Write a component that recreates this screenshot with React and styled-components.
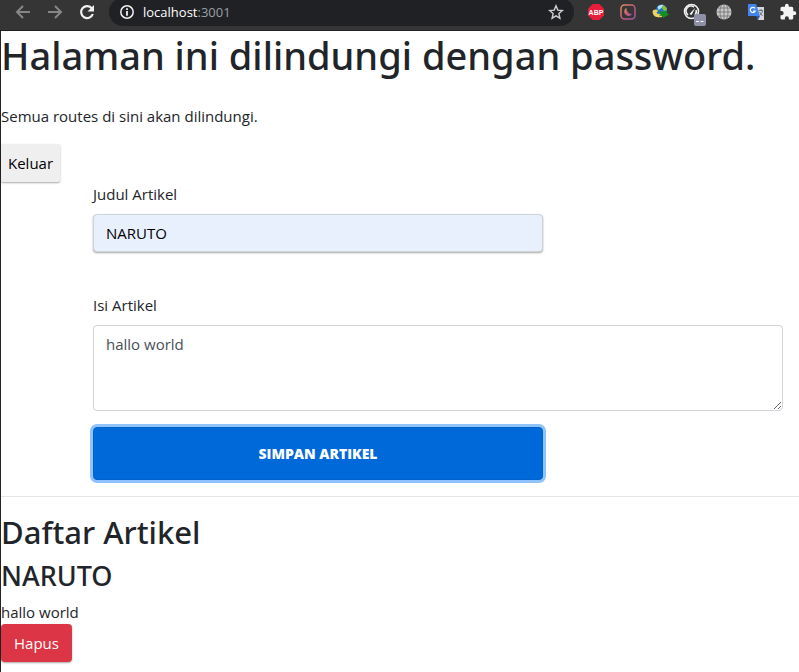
import React from "react";
import styled, { createGlobalStyle } from "styled-components";

const GlobalStyle = createGlobalStyle`
  *, *::before, *::after { box-sizing: border-box; }
  body {
    margin: 0;
    background: #fff;
    color: #212529;
    font-family: "Open Sans", "Noto Sans", sans-serif;
    font-size: 15px;
    line-height: 24px;
  }
  h1, h2, h3 { font-family: "Noto Sans", "Open Sans", sans-serif; font-weight: 500; }
  button, input, textarea { font: inherit; margin: 0; }
`;

const Window = styled.div`
  display: flex;
  flex-direction: column;
  min-height: 100vh;
`;

const Toolbar = styled.header`
  display: flex;
  align-items: center;
  height: 31px;
  padding: 0 1px 6px 13px;
  background: #353535;
  border-bottom: 1px solid #202124;
`;

const NavGroup = styled.nav`
  display: flex;
  gap: 12px;
  margin-right: 12px;
`;

const IconButton = styled.button`
  display: grid;
  place-items: center;
  flex: none;
  width: 20px;
  height: 20px;
  padding: 0;
  border: 0;
  background: none;
  color: ${(p) => (p.$dim ? "#868686" : "#f1f1f1")};
`;

const AddressBar = styled.div`
  display: flex;
  align-items: center;
  flex: 1;
  min-width: 0;
  height: 28px;
  padding: 0 8px;
  border-radius: 14px;
  background: #202124;
`;

const Address = styled.span`
  flex: 1;
  margin-left: 6px;
  color: #9aa0a6;
  font-size: 13px;
  line-height: 20px;
`;

const Host = styled.span`
  color: #fff;
`;

const Extensions = styled.div`
  display: flex;
  gap: 12px;
  margin-left: 12px;
`;

const Page = styled.main`
  flex: 1;
  padding-bottom: 10px;
  border-left: 1px solid #242424;
`;

const Title = styled.h1`
  margin: 0 0 25px;
  font-size: 38px;
  line-height: 48px;
`;

const Intro = styled.p`
  margin: 0 0 16px;
`;

const Button = styled.button`
  display: block;
  height: 38px;
  padding: 0 ${(p) => (p.$danger ? 13 : 7)}px;
  border: 0;
  border-radius: ${(p) => (p.$danger ? 4 : 2)}px;
  background: ${(p) => (p.$danger ? "#dc3545" : "#efefef")};
  color: ${(p) => (p.$danger ? "#fff" : "#000")};
  box-shadow: 0 1px 2px rgba(0, 0, 0, 0.35);
`;

const Form = styled.form`
  display: flex;
  flex-direction: column;
  padding: 0 16px 0 92px;
`;

const Label = styled.label`
  margin-bottom: 8px;
`;

const TextInput = styled.input`
  width: 100%;
  max-width: 450px;
  height: 38px;
  margin-bottom: 41px;
  padding: 0 12px;
  border: 1px solid #ced4da;
  border-radius: 4px;
  background: #e8f0fe;
  color: #000;
  box-shadow: 0 1px 2px rgba(0, 0, 0, 0.35);
`;

const TextArea = styled.textarea`
  width: 100%;
  height: 86px;
  margin-bottom: 16px;
  padding: 6px 12px;
  border: 1px solid #ced4da;
  border-radius: 4px;
  color: #495057;
  resize: vertical;
`;

const SubmitButton = styled.button`
  width: 100%;
  max-width: 450px;
  height: 53px;
  border: 1px solid #0062cc;
  border-radius: 4px;
  background: #0069d9;
  color: #fff;
  font-size: 14px;
  font-weight: 800;
  text-transform: uppercase;
  box-shadow: 0 0 0 3px #8fc3fb;
`;

const Divider = styled.hr`
  margin: 16px 0;
  border: 0;
  border-top: 1px solid #e5e5e5;
`;

const SectionTitle = styled.h2`
  margin: 0 0 8px;
  font-size: 31px;
  line-height: 38px;
`;

const ArticleTitle = styled.h3`
  margin: 0 0 7px;
  font-size: 27px;
  line-height: 34px;
`;

const ArticleText = styled.p`
  margin: 0;
`;

const Arrow = ({ back }) => (
  <svg width="16" height="16" viewBox="0 0 16 16" fill="none" stroke="currentColor" strokeWidth="2">
    <path d={back ? "M15 8H2M8 2 2 8l6 6" : "M1 8h13M8 2l6 6-6 6"} />
  </svg>
);

const ReloadIcon = () => (
  <svg width="16" height="16" viewBox="0 0 16 16">
    <path d="M13 4.600A6 6 0 1 0 13.800 10" fill="none" stroke="currentColor" strokeWidth="2.200" />
    <path d="M15 1v6.500H8.500z" fill="currentColor" />
  </svg>
);

const InfoIcon = () => (
  <svg width="16" height="16" viewBox="0 0 16 16">
    <circle cx="8" cy="8" r="6.200" fill="none" stroke="currentColor" strokeWidth="1.500" />
    <path d="M7.100 4.300h1.800v1.800H7.100zM7.100 7.100h1.800v4.700H7.100z" fill="currentColor" />
  </svg>
);

const StarIcon = () => (
  <svg width="16" height="16" viewBox="0 0 16 16">
    <path d="m8 1.800 1.800 4.300 4.600.4-3.500 3.100 1 4.600L8 11.800l-3.900 2.400 1-4.600-3.500-3.100 4.600-.4z" fill="none" stroke="#d0d0d0" strokeWidth="1.400" />
  </svg>
);

const AbpIcon = () => (
  <svg width="18" height="18" viewBox="0 0 18 18">
    <path d="M5.700 1h6.600L17 5.700v6.600L12.300 17H5.700L1 12.300V5.700z" fill="#e61e3c" />
    <text x="9" y="12" textAnchor="middle" fontFamily="Liberation Sans, sans-serif" fontSize="7" fontWeight="700" fill="#fff">ABP</text>
  </svg>
);

const MoonIcon = () => (
  <svg width="18" height="18" viewBox="0 0 18 18">
    <defs>
      <linearGradient id="moon" x1="0" y1="0" x2="1" y2="1">
        <stop offset="0" stopColor="#e2915f" />
        <stop offset="0.5" stopColor="#c95a78" />
        <stop offset="1" stopColor="#9a55a8" />
      </linearGradient>
    </defs>
    <rect x="2" y="2" width="14" height="14" rx="3.500" fill="none" stroke="url(#moon)" strokeWidth="1.500" />
    <path d="M7.500 4.800a4.300 4.300 0 1 0 5.700 6 5 5 0 0 1-5.700-6z" fill="url(#moon)" />
  </svg>
);

const DownloadGlobeIcon = () => (
  <svg width="18" height="18" viewBox="0 0 18 18">
    <circle cx="10.500" cy="7" r="5.500" fill="#2474c8" />
    <path d="M6.500 4c1.500-2 4-2.500 6-2l-2 3-3 2z" fill="#b4e3f5" />
    <path d="M12 2c3 1 4 3 4 5l-3 1-2-3z" fill="#8abf3e" />
    <path d="M1.500 9c.5-3 4-3 5.500-1l-1.500 1.500c1 2 4 2 6 1L11 14c-4 1-9 0-9.500-5z" fill="#efd066" />
    <path d="m7 7 3 1.500L16.500 8l-1 1.500 2.500 2-6 3.500-1-2-3-.5 2-1.500z" fill="#129022" />
  </svg>
);

const GaugeIcon = () => (
  <svg width="24" height="24" viewBox="0 0 24 24">
    <circle cx="9.500" cy="9.500" r="7" fill="#353535" stroke="#f0f0f0" strokeWidth="1.600" />
    <path d="M6 13a5 5 0 0 1 6-8M14 8a5 5 0 0 1-1 5" fill="none" stroke="#eee" strokeWidth="1.600" />
    <path d="m7.500 12 6-6.500-4 7.500z" fill="#fff" />
    <rect x="12" y="12" width="12" height="12" rx="2" fill="#8e90a7" />
    <path d="M14 19.500h3M18.500 19.500h3" stroke="#fff" strokeWidth="1.200" />
  </svg>
);

const WebIcon = () => (
  <svg width="18" height="18" viewBox="0 0 18 18">
    <circle cx="9" cy="9" r="7.500" fill="#c9c9c9" />
    <path d="M9 1.500v15M1.500 9h15M3 5h12M3 13h12M6.500 2c-2 4-2 10 0 14M11.500 2c2 4 2 10 0 14" fill="none" stroke="#777" strokeWidth="0.900" />
  </svg>
);

const TranslateIcon = () => (
  <svg width="18" height="18" viewBox="0 0 18 18">
    <path d="M8 4h9v13h-6z" fill="#d5d7da" />
    <path d="M1 1h8l4 12H1z" fill="#4384ee" />
    <path d="m9 13 4 0-2 4z" fill="#3457b0" />
    <path d="M8 5.300A2.600 2.600 0 1 0 8.300 8H6" fill="none" stroke="#fff" strokeWidth="1.200" />
    <path d="M11.500 7.500H16M14 6v2M15.500 8c-.5 2-1.500 3-2.500 4M12.500 9l3 4" fill="none" stroke="#69727c" strokeWidth="1" />
  </svg>
);

const PuzzleIcon = () => (
  <svg width="18" height="18" viewBox="0 0 24 24">
    <path d="M20.500 11H19V7a2 2 0 0 0-2-2h-4V3.500a2.500 2.500 0 0 0-5 0V5H4a2 2 0 0 0-2 2v3.800h1.500a2.700 2.700 0 0 1 0 5.400H2V20a2 2 0 0 0 2 2h3.800v-1.500a2.700 2.700 0 0 1 5.400 0V22H17a2 2 0 0 0 2-2v-4h1.500a2.500 2.500 0 0 0 0-5z" fill="#f4f4f4" />
  </svg>
);

const extensions = [
  ["Adblock Plus", AbpIcon],
  ["Night mode", MoonIcon],
  ["Download manager", DownloadGlobeIcon],
  ["Speed", GaugeIcon],
  ["Web", WebIcon],
  ["Translate", TranslateIcon],
  ["Extensions", PuzzleIcon],
];

export default function App() {
  return (
    <Window>
      <GlobalStyle />
      <Toolbar>
        <NavGroup>
          <IconButton $dim aria-label="Back"><Arrow back /></IconButton>
          <IconButton $dim aria-label="Forward"><Arrow /></IconButton>
          <IconButton aria-label="Reload"><ReloadIcon /></IconButton>
        </NavGroup>
        <AddressBar>
          <IconButton aria-label="Site information"><InfoIcon /></IconButton>
          <Address><Host>localhost</Host>:3001</Address>
          <IconButton aria-label="Bookmark"><StarIcon /></IconButton>
        </AddressBar>
        <Extensions>
          {extensions.map(([name, Icon]) => (
            <IconButton key={name} aria-label={name}><Icon /></IconButton>
          ))}
        </Extensions>
      </Toolbar>
      <Page>
        <Title>Halaman ini dilindungi dengan password.</Title>
        <Intro>Semua routes di sini akan dilindungi.</Intro>
        <Button type="button">Keluar</Button>
        <Form onSubmit={(e) => e.preventDefault()}>
          <Label htmlFor="title">Judul Artikel</Label>
          <TextInput id="title" defaultValue="NARUTO" />
          <Label htmlFor="body">Isi Artikel</Label>
          <TextArea id="body" defaultValue="hallo world" />
          <SubmitButton type="submit">Simpan Artikel</SubmitButton>
        </Form>
        <Divider />
        <SectionTitle>Daftar Artikel</SectionTitle>
        <article>
          <ArticleTitle>NARUTO</ArticleTitle>
          <ArticleText>hallo world</ArticleText>
          <Button type="button" $danger>Hapus</Button>
        </article>
      </Page>
    </Window>
  );
}
